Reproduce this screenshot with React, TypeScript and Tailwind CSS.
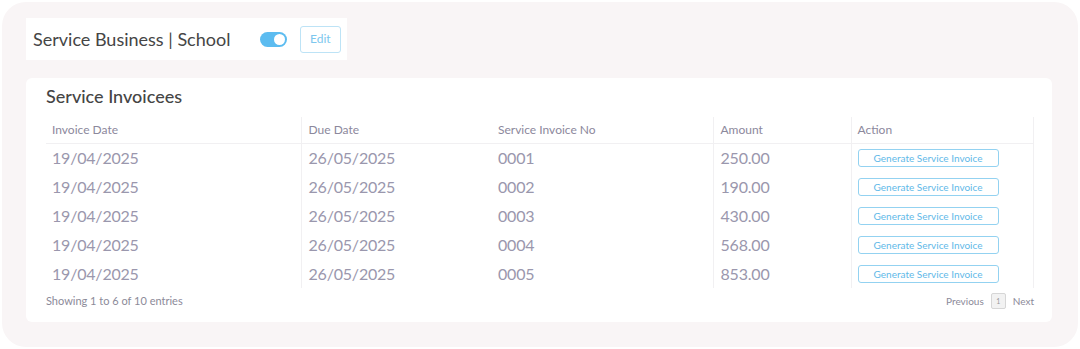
import { useState } from 'react'

interface Invoice {
  invoiceDate: string
  dueDate: string
  number: string
  amount: string
}

const invoices: Invoice[] = [
  { invoiceDate: '19/04/2025', dueDate: '26/05/2025', number: '0001', amount: '250.00' },
  { invoiceDate: '19/04/2025', dueDate: '26/05/2025', number: '0002', amount: '190.00' },
  { invoiceDate: '19/04/2025', dueDate: '26/05/2025', number: '0003', amount: '430.00' },
  { invoiceDate: '19/04/2025', dueDate: '26/05/2025', number: '0004', amount: '568.00' },
  { invoiceDate: '19/04/2025', dueDate: '26/05/2025', number: '0005', amount: '853.00' },
]

function Toggle() {
  const [on, setOn] = useState(true)
  return (
    <button
      onClick={() => setOn(!on)}
      className={`relative w-[27px] h-[15px] rounded-full transition-colors ${on ? 'bg-[#5cbcf0]' : 'bg-gray-300'}`}
    >
      <span
        className={`absolute top-[2px] w-[11px] h-[11px] rounded-full bg-white transition-all ${on ? 'left-[14px]' : 'left-[2px]'}`}
      />
    </button>
  )
}

export default function App() {
  return (
    <div className="w-[1080px] h-[349px] bg-white p-[2px] font-['Lato',sans-serif]">
      <div className="h-full rounded-[24px] bg-[#f9f5f6] px-[24px] pt-[16px]">
        <div className="inline-flex items-center h-[42px] bg-white pl-[7px] pr-[6px]">
          <span className="text-[18px] text-[#454545] w-[227px]">Service Business | School</span>
          <Toggle />
          <button className="ml-[13px] h-[27px] px-[9px] rounded-[3px] border border-[#bde3f6] text-[12px] text-[#7cc7ee]">
            Edit
          </button>
        </div>

        <div className="mt-[18px] bg-white rounded-[6px] w-[1026px] h-[244px] pl-[20px] pr-[18px] pt-[6px]">
          <h2 className="text-[18px] font-medium text-[#454545] h-[24px] leading-[24px]">Service Invoicees</h2>

          <table className="mt-[9px] w-[988px] border-collapse">
            <thead>
              <tr className="h-[26px] text-left text-[12px] text-[#8c889c]">
                <th className="font-normal pl-[6px] w-[255px] border-b border-[#f1f0f2]">Invoice Date</th>
                <th className="font-normal pl-[7px] w-[190px] border-b border-l border-[#f1f0f2]">Due Date</th>
                <th className="font-normal pl-[7px] w-[222px] border-b border-[#f1f0f2]">Service Invoice No</th>
                <th className="font-normal pl-[7px] w-[138px] border-b border-l border-[#f1f0f2]">Amount</th>
                <th className="font-normal pl-[6px] border-b border-l border-r border-[#f1f0f2]">Action</th>
              </tr>
            </thead>
            <tbody>
              {invoices.map((inv) => (
                <tr key={inv.number} className="h-[29px] text-[16px] tracking-[-0.2px] text-[#9a97ad]">
                  <td className="pl-[6px]">{inv.invoiceDate}</td>
                  <td className="pl-[7px] border-l border-[#f1f0f2]">{inv.dueDate}</td>
                  <td className="pl-[7px]">{inv.number}</td>
                  <td className="pl-[7px] border-l border-[#f1f0f2]">{inv.amount}</td>
                  <td className="pl-[6px] border-l border-r border-[#f1f0f2]">
                    <button className="block w-[141px] h-[18px] rounded-[3px] border border-[#93d2f1] text-[10px] tracking-normal text-[#5fb9e8] leading-none">
                      Generate Service Invoice
                    </button>
                  </td>
                </tr>
              ))}
            </tbody>
          </table>

          <div className="flex items-center justify-between mt-[5px]">
            <span className="text-[11px] text-[#8c8a99]">Showing 1 to 6 of 10 entries</span>
            <div className="flex items-center gap-[7px] text-[10px] text-[#8c8a99]">
              <span>Previous</span>
              <span className="w-[15px] h-[16px] flex items-center justify-center rounded-[2px] border border-[#d6d6d6] bg-[#f2f2f2] text-[7px] text-[#999]">
                1
              </span>
              <span>Next</span>
            </div>
          </div>
        </div>
      </div>
    </div>
  )
}
